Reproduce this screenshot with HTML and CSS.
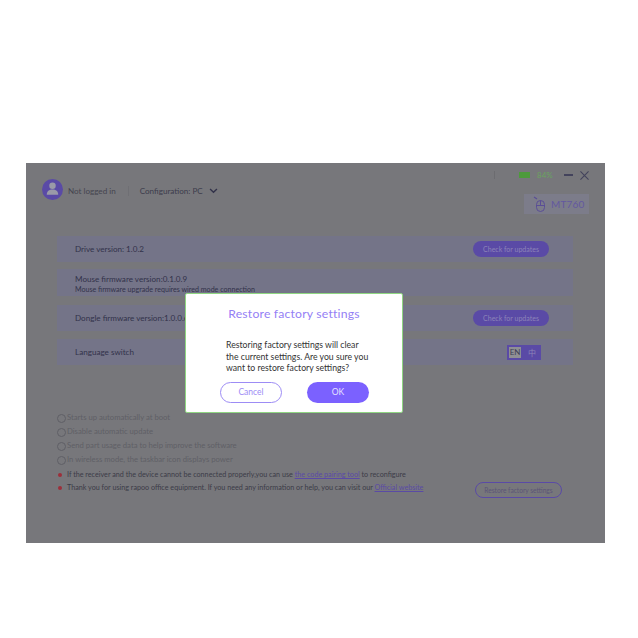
FILE: index.html
```html
<!DOCTYPE html>
<html lang="en">
<head>
  <meta charset="UTF-8">
  <title>Settings</title>
  <link rel="stylesheet" href="styles.css">
</head>
<body>
  <div class="window">
    <div class="titlebar">
      <div class="user">
        <span class="avatar">
          <svg width="22" height="22" viewBox="0 0 22 22"><circle cx="11" cy="7.5" r="3.4" fill="#9a9aa8"/><path d="M5 17c0-4 2.5-5.6 6-5.6s6 1.6 6 5.6z" fill="#9a9aa8"/></svg>
        </span>
        <span class="user-name">Not logged in</span>
        <span class="sep"></span>
        <span class="config">Configuration: PC</span>
        <svg class="chevron" width="9" height="6" viewBox="0 0 10 7"><path d="M1 1.2l4 3.8 4-3.8" fill="none" stroke="#32324a" stroke-width="1.6"/></svg>
      </div>
      <div class="controls">
        <span class="tick"></span>
        <span class="battery"></span>
        <span class="percent">84%</span>
        <span class="minimize"></span>
        <svg width="9" height="9" viewBox="0 0 10 10"><path d="M.5.5l9 9M9.5.5l-9 9" stroke="#43435c" stroke-width="1.2"/></svg>
      </div>
    </div>

    <div class="device-wrap">
      <div class="device">
        <svg width="13" height="17" viewBox="0 0 13 17"><path d="M1 1l3 2" stroke="#5a4e96" stroke-width="1.2"/><rect x="3.5" y="4.5" width="8" height="11" rx="4" fill="none" stroke="#5a4e96"/><path d="M7.5 4.5v5M3.5 9.5h8" stroke="#5a4e96"/></svg>
        <span>MT760</span>
      </div>
    </div>

    <div class="rows">
      <div class="row row-first">
        <span>Drive version: 1.0.2</span>
        <button class="update-btn">Check for updates</button>
      </div>
      <div class="row row-firmware">
        <div>
          <div class="firmware-name">Mouse firmware version:0.1.0.9</div>
          <div class="firmware-note">Mouse firmware upgrade requires wired mode connection</div>
        </div>
      </div>
      <div class="row row-dongle">
        <span>Dongle firmware version:1.0.0.6</span>
        <button class="update-btn">Check for updates</button>
      </div>
      <div class="row">
        <span>Language switch</span>
        <div class="lang"><span class="lang-on">EN</span><span class="lang-off">中</span></div>
      </div>
    </div>

    <div class="bottom">
      <ul class="options">
        <li class="option">Starts up automatically at boot</li>
        <li class="option">Disable automatic update</li>
        <li class="option">Send part usage data to help improve the software</li>
        <li class="option">In wireless mode, the taskbar icon displays power</li>
        <li class="note">If the receiver and the device cannot be connected properly,you can use <a href="#">the code pairing tool</a> to reconfigure</li>
        <li class="note">Thank you for using rapoo office equipment. If you need any information or help, you can visit our <a href="#">Official website</a></li>
      </ul>
      <button class="restore-btn">Restore factory settings</button>
    </div>

    <div class="dialog">
      <h2>Restore factory settings</h2>
      <p>Restoring factory settings will clear<br>the current settings. Are you sure you<br>want to restore factory settings?</p>
      <div class="dialog-actions">
        <button class="btn-cancel">Cancel</button>
        <button class="btn-ok">OK</button>
      </div>
    </div>
  </div>
</body>
</html>
```

FILE: styles.css
```css
:root {
  --dim: #77777b;
  --row: #747488;
  --purple: #7b61ff;
  --dim-purple: #5a4aa6;
  --dim-text: #32324a;
  --faint-text: #5f5f66;
}

* {
  box-sizing: border-box;
  margin: 0;
  padding: 0;
}

body {
  font-family: Lato, 'Noto Sans CJK SC', Arial, sans-serif;
  background: white;
  padding: 163px 33px 0 26px;
}

button {
  font-family: inherit;
  border: none;
}

.window {
  position: relative;
  width: 579px;
  height: 380px;
  background: var(--dim);
  color: var(--dim-text);
}

.titlebar {
  display: flex;
  justify-content: space-between;
  padding: 6px 16px 0 16px;
  height: 31px;
}

.user {
  display: flex;
  align-items: center;
  height: 32px;
  margin-top: 4px;
  font-size: 8.1px;
}

.avatar {
  display: flex;
  align-items: center;
  justify-content: center;
  width: 21px;
  height: 21px;
  border-radius: 50%;
  background: var(--dim-purple);
  overflow: hidden;
}

.user-name {
  margin: 3px 0 0 5px;
  color: #45454f;
}

.sep {
  width: 1px;
  height: 10px;
  margin: 3px 11px 0 12px;
  background: #6f6f74;
}

.config {
  margin-top: 3px;
  color: #3c3c4c;
}

.chevron {
  margin: 3px 0 0 6px;
}

.controls {
  display: flex;
  align-items: center;
  height: 12px;
  font-size: 8px;
}

.tick {
  width: 1px;
  height: 8px;
  margin-right: 24px;
  background: #6c6c70;
}

.battery {
  width: 11px;
  height: 6px;
  background: #4d9a3c;
}

.percent {
  width: 14px;
  margin-left: 7px;
  color: #6aa35f;
}

.minimize {
  width: 9px;
  height: 2px;
  margin: 0 7px 0 13px;
  background: #43435c;
}

.device-wrap {
  display: flex;
  justify-content: flex-end;
  padding: 0 16px 0 0;
}

.device {
  display: flex;
  align-items: center;
  gap: 5px;
  width: 65px;
  height: 20px;
  padding-left: 9px;
  background: #7c7c8a;
  color: #6358a0;
  font-size: 10px;
  letter-spacing: 0.2px;
}

.rows {
  margin: 22px 32px 0 31px;
  font-size: 8.1px;
}

.row {
  display: flex;
  align-items: center;
  justify-content: space-between;
  height: 26px;
  margin-bottom: 8px;
  padding: 0 24px 0 18px;
  background: var(--row);
}

.row-first {
  margin-bottom: 7px;
}

.row-firmware {
  height: 27px;
  margin-bottom: 9px;
  align-items: flex-start;
}

.firmware-name {
  margin-top: 4px;
  line-height: 12px;
}

.firmware-note {
  font-size: 7.1px;
  line-height: 10px;
}

.update-btn {
  width: 76px;
  height: 16px;
  border-radius: 8px;
  background: var(--dim-purple);
  color: #8d84b8;
  font-size: 7px;
}

.lang {
  display: flex;
  align-items: center;
  width: 34px;
  height: 15px;
  margin-right: 8px;
  padding: 2px;
  background: var(--dim-purple);
  font-size: 8px;
}

.lang-on {
  width: 12px;
  height: 11px;
  line-height: 11px;
  text-align: center;
  background: #8f8f94;
  color: #3e3e55;
}

.lang-off {
  margin-left: 7px;
  color: #8d84b8;
}

.bottom {
  display: flex;
  justify-content: space-between;
  align-items: flex-end;
  margin-top: 45px;
  padding: 0 43px 0 31px;
}

.options {
  list-style: none;
  font-size: 7.7px;
}

.option {
  position: relative;
  height: 14px;
  line-height: 14px;
  padding-left: 10px;
  color: var(--faint-text);
}

.option::before {
  content: "";
  position: absolute;
  left: 0;
  top: 3.5px;
  width: 7px;
  height: 7px;
  border: 1px solid #5f5f66;
  border-radius: 50%;
}

.note {
  position: relative;
  height: 13px;
  line-height: 13px;
  padding-left: 10px;
  font-size: 7.2px;
  color: #3c3c48;
  white-space: nowrap;
}

.option + .note {
  margin-top: 2px;
}

.note::before {
  content: "";
  position: absolute;
  left: 1px;
  top: 4.5px;
  width: 4px;
  height: 4px;
  border-radius: 50%;
  background: #9c2f3a;
}

.note a {
  color: var(--dim-purple);
}

.restore-btn {
  width: 87px;
  height: 16px;
  margin-bottom: -4px;
  border: 1px solid var(--dim-purple);
  border-radius: 8px;
  background: transparent;
  color: #5b5478;
  font-size: 6.6px;
  white-space: nowrap;
}

.dialog {
  position: absolute;
  left: 159px;
  top: 130px;
  width: 218px;
  height: 120px;
  padding: 0 20px 0 40px;
  background: white;
  border: 1px solid #8fd682;
  border-radius: 2px;
  color: #333;
}

.dialog h2 {
  margin: 10px 14px 0 -6px;
  font-size: 12.2px;
  font-weight: 400;
  line-height: 20px;
  letter-spacing: 0.2px;
  text-align: center;
  white-space: nowrap;
  color: #9480f5;
}

.dialog p {
  margin-top: 15px;
  font-size: 8.7px;
  line-height: 11.5px;
  white-space: nowrap;
}

.dialog-actions {
  display: flex;
  gap: 25px;
  margin: 8px 0 0 -6px;
}

.btn-cancel,
.btn-ok {
  width: 62px;
  height: 21px;
  border-radius: 11px;
  font-size: 8.5px;
}

.btn-cancel {
  background: white;
  border: 1px solid #9d8cf5;
  color: #9d8cf5;
}

.btn-ok {
  background: var(--purple);
  color: #e6e0ff;
}
```
